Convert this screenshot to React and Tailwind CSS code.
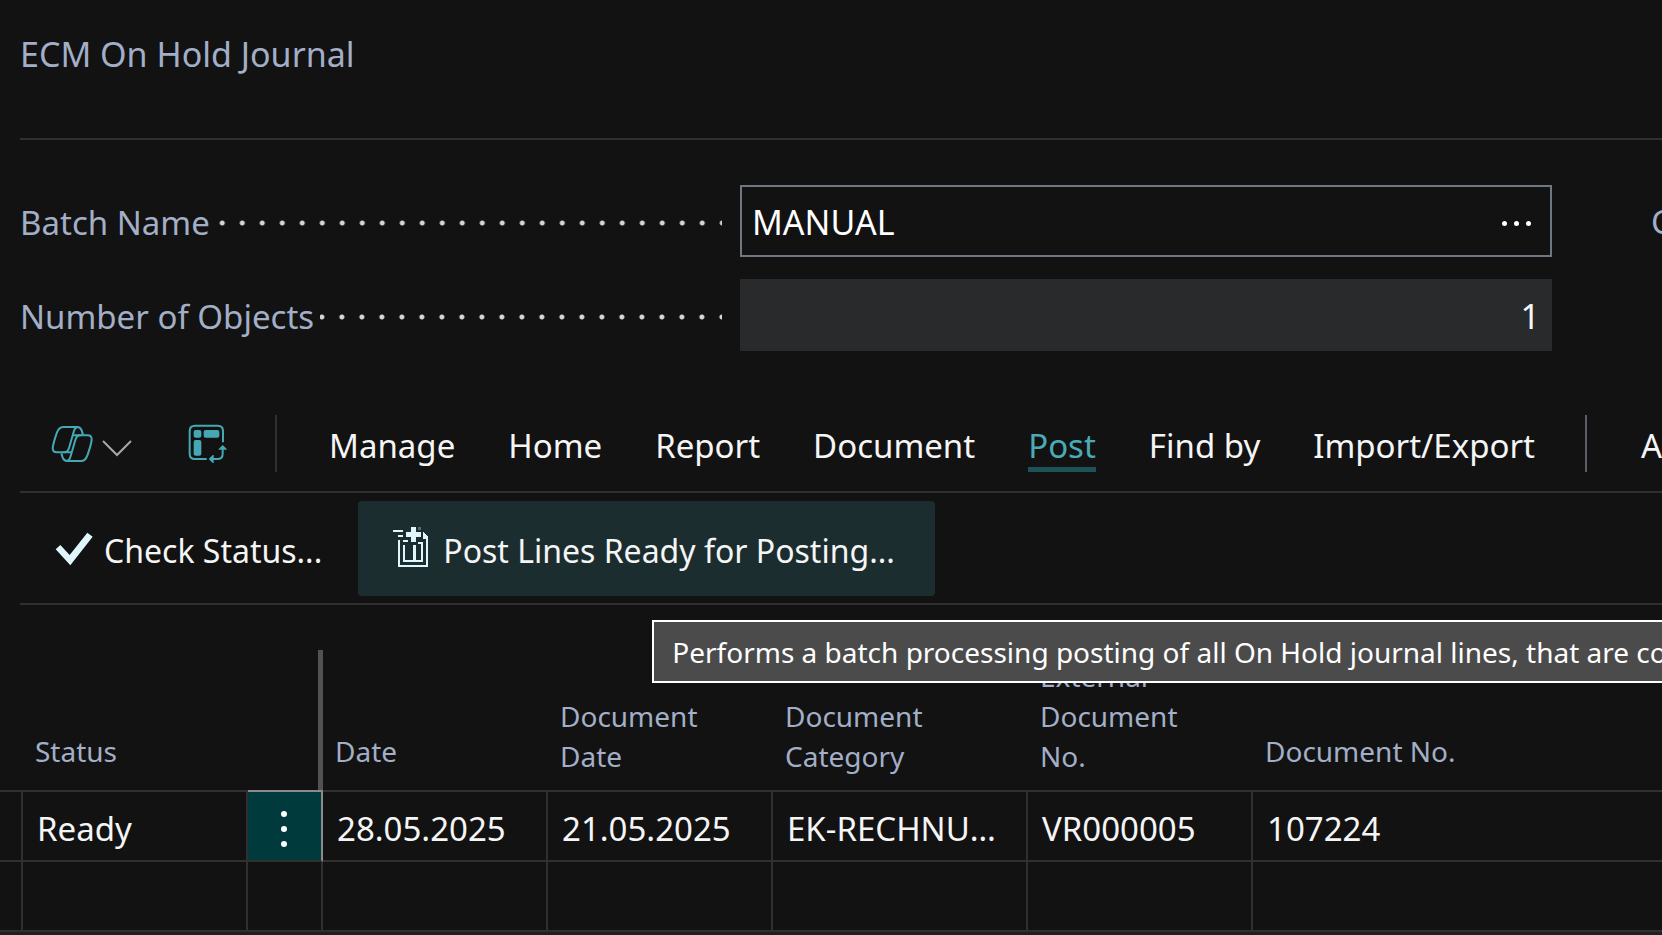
import React from "react";

const tabs = ["Manage", "Home", "Report", "Document", "Post", "Find by", "Import/Export"];

function CopilotIcon() {
  return (
    <svg viewBox="93 75 126 114" className="h-[38px] w-[42px] shrink-0" fill="none" stroke="#45a9b5" strokeWidth="6" aria-hidden="true">
      <path d="M132 157H110Q98 157 98 145Q99 131 111 97Q117 81 130 81H172Q181 81 185 91L189 104" />
      <path d="M132 157Q143 157 147 144L161 96Q165 82 172 82" />
      <path d="M181 106H203Q215 106 215 119Q214 133 202 167Q196 183 183 183H141Q132 183 128 173L124 160" />
      <path d="M181 106Q170 106 166 120L152 168Q148 182 141 182" />
      <path d="M159 106H184M130 157H154" />
    </svg>
  );
}

function LayoutIcon() {
  return (
    <svg viewBox="506 76 117 117" className="h-[39px] w-[39px] shrink-0" aria-hidden="true">
      <g fill="none" stroke="#45a9b5" strokeWidth="6">
        <path d="M562 181H527Q511 181 511 165V97Q511 81 527 81H595Q611 81 611 97V131" />
        <path d="M610 149V165Q610 181 594 181H580" />
      </g>
      <g fill="#45a9b5">
        <rect x="523" y="94" width="23" height="23" rx="6" />
        <rect x="553" y="94" width="47" height="23" rx="6" />
        <rect x="523" y="124" width="23" height="47" rx="6" />
        <path d="M610 139L622 151V153H598V151Z" />
        <path d="M568 181L580 169H583V193H580Z" />
      </g>
    </svg>
  );
}

function CheckIcon() {
  return (
    <svg viewBox="105 127 114 102" className="h-[34px] w-[38px] shrink-0" fill="#dff7fc" aria-hidden="true">
      <path d="M107 179L121 166L149 196L202 129L218 141L151 227Z" />
    </svg>
  );
}

function PostIcon() {
  return (
    <svg viewBox="1118 114 108 120" className="mb-1 h-10 w-9 shrink-0" fill="#dff7fc" shapeRendering="crispEdges" aria-hidden="true">
      <path d="M1118 122h31v7h-31zM1133 137h16v6h-16zM1148 152h16v6h-16z" />
      <path d="M1172 114h15v45h-15zM1157 129h45v15h-45z" />
      <path d="M1194 115h8v8h-8z" opacity="0.3" />
      <path d="M1209 130L1224 143V151H1209Z" />
      <path d="M1133 152h6v82h-6zM1133 228h91v6h-91zM1218 145h6v89h-6z" />
      <path d="M1148 167h6v52h-6zM1148 213h61v6h-61zM1203 160h6v59h-6zM1194 159h15v6h-15zM1178 167h9v48h-9z" />
    </svg>
  );
}

function DotLeader() {
  return (
    <span
      aria-hidden="true"
      className="ml-1.5 h-5 flex-1 bg-[radial-gradient(circle_at_center,#d4d7dc_2px,transparent_3px)] bg-[length:20px_20px] bg-[position:right_-10px_center] bg-repeat-x"
    />
  );
}

function Field({ id, label, children }) {
  return (
    <div className="grid grid-cols-[702fr_812fr] items-center gap-x-[18px]">
      <div className="flex items-center pt-1">
        <label htmlFor={id} className="whitespace-nowrap text-[#a3aec7]">{label}</label>
        <DotLeader />
      </div>
      {children}
    </div>
  );
}

function Th({ children, single }) {
  return (
    <th scope="col" className={`border-b-2 border-[#303030] pb-3.5 pl-3 text-left align-bottom text-[28px] font-normal text-[#a3aec7] ${single ? "leading-[50px]" : "leading-10"}`}>
      {children}
    </th>
  );
}

function Td({ children }) {
  return (
    <td className="h-[70px] truncate border-r-2 border-b-2 border-[#303030] pt-[5px] pr-3 pl-3.5 last:border-r-0">{children}</td>
  );
}

export default function App() {
  return (
    <div className="min-h-screen overflow-hidden bg-[#121212] font-['Noto_Sans','Segoe_UI',sans-serif] text-[33px] leading-[50px] text-[#f5f5f5]">
      <div className="pl-5">
        <header className="border-b-2 border-[#303030] pt-[29px] pb-[59px]">
          <h1 className="text-[34px] text-[#a3aec7]">ECM On Hold Journal</h1>
        </header>

        <form className="flex pt-[45px] pb-[52px]">
          <div className="flex flex-1 flex-col gap-[22px]">
            <Field id="batch" label="Batch Name">
              <div className="flex h-[72px] items-center border-2 border-[#6f7782]">
                <input id="batch" defaultValue="MANUAL" className="h-full min-w-0 flex-1 bg-transparent pt-0.5 pl-2.5 text-[34px] text-white outline-none" />
                <button type="button" aria-label="Choose a batch" className="flex h-full items-center gap-[7px] pt-1 pr-[19px] pl-4">
                  <span className="size-[5px] rounded-full bg-white" />
                  <span className="size-[5px] rounded-full bg-white" />
                  <span className="size-[5px] rounded-full bg-white" />
                </button>
              </div>
            </Field>
            <Field id="count" label="Number of Objects">
              <input id="count" readOnly defaultValue="1" className="h-[72px] w-full min-w-0 bg-[#292a2c] pt-0.5 pr-3 text-right text-[34px] text-[#f5f5f5] outline-none" />
            </Field>
          </div>
          <div className="flex h-[72px] w-[110px] items-center overflow-hidden pt-0.5 pl-[99px] text-[#a3aec7]">C</div>
        </form>

        <nav className="flex h-[90px] items-start border-b-2 border-[#303030] pt-3">
          <button type="button" aria-label="Copilot" className="ml-[31px] flex h-[57px] items-center gap-[9px]">
            <CopilotIcon />
            <svg viewBox="0 0 30 18" className="mt-2 h-[18px] w-[30px]" fill="none" stroke="#a8a8a8" strokeWidth="2" aria-hidden="true">
              <path d="M1 2L15 16L29 2" />
            </svg>
          </button>
          <button type="button" aria-label="Change layout" className="ml-14 flex h-[57px] items-center">
            <LayoutIcon />
          </button>
          <span className="ml-12 h-[57px] w-0.5 shrink-0 bg-[#303030]" />
          <div className="ml-[52px] flex gap-[53px]">
            {tabs.map((tab) => (
              <button
                key={tab}
                type="button"
                className={
                  tab === "Post"
                    ? "h-[57px] border-b-[5px] border-[#1d5257] pt-1.5 whitespace-nowrap text-[#4aabb5]"
                    : "h-[57px] border-b-[5px] border-transparent pt-1.5 whitespace-nowrap"
                }
              >
                {tab}
              </button>
            ))}
          </div>
          <span className="ml-[50px] h-[57px] w-0.5 shrink-0 bg-[#5b5e66]" />
          <button type="button" className="ml-[54px] h-[57px] border-b-[5px] border-transparent pt-1.5">Actions</button>
        </nav>

        <div className="flex border-b-2 border-[#303030] pt-2 pb-[7px] text-[32px]">
          <button type="button" className="flex h-[95px] items-center gap-[11px] pr-9 pl-[35px] whitespace-nowrap">
            <CheckIcon />
            <span className="pt-1">Check Status...</span>
          </button>
          <div className="relative">
            <button type="button" aria-describedby="post-tip" className="flex h-[95px] items-center gap-3.5 rounded-[4px] bg-[#1c2d30] pr-10 pl-[35px] whitespace-nowrap">
              <PostIcon />
              <span className="pt-1">Post Lines Ready for Posting...</span>
            </button>
            <div id="post-tip" role="tooltip" className="absolute top-[119px] left-[294px] z-10 flex h-[63px] items-center border-2 border-white bg-[#4b4b4b] px-[18px] text-[28px] whitespace-nowrap text-white">
              Performs a batch processing posting of all On Hold journal lines, that are complete
            </div>
          </div>
        </div>
      </div>

      <table className="mt-[45px] w-full table-fixed border-separate border-spacing-0">
        <colgroup>
          <col className="w-[23px]" />
          <col className="w-[225px]" />
          <col className="w-[75px]" />
          <col className="w-[225px]" />
          <col className="w-[225px]" />
          <col className="w-[255px]" />
          <col className="w-[225px]" />
          <col />
        </colgroup>
        <thead>
          <tr>
            <td className="border-b-2 border-[#303030]" />
            <Th single>Status</Th>
            <td className="border-b-2 border-[#8b8b8b] p-0">
              <div className="h-[140px] border-r-[5px] border-[#525252]" />
            </td>
            <Th single>Date</Th>
            <Th>Document<br />Date</Th>
            <Th>Document<br />Category</Th>
            <Th>External<br />Document<br />No.</Th>
            <Th single>Document No.</Th>
          </tr>
        </thead>
        <tbody>
          <tr>
            <Td />
            <Td>Ready</Td>
            <td className="border-r-2 border-b-2 border-r-[#8b8b8b] border-b-[#303030] bg-[#003a3d] p-0">
              <button type="button" aria-label="Show more options" className="flex h-[68px] w-full flex-col items-center justify-center gap-[9px] pt-1.5 pr-0.5">
                <span className="size-1.5 rounded-full bg-white" />
                <span className="size-1.5 rounded-full bg-white" />
                <span className="size-1.5 rounded-full bg-white" />
              </button>
            </td>
            <Td>28.05.2025</Td>
            <Td>21.05.2025</Td>
            <Td>EK-RECHNUNG</Td>
            <Td>VR000005</Td>
            <Td>107224</Td>
          </tr>
          <tr>
            <Td /><Td /><Td /><Td /><Td /><Td /><Td /><Td />
          </tr>
        </tbody>
      </table>
      <div className="h-[3px] bg-[#1f1f1f]" />
    </div>
  );
}
